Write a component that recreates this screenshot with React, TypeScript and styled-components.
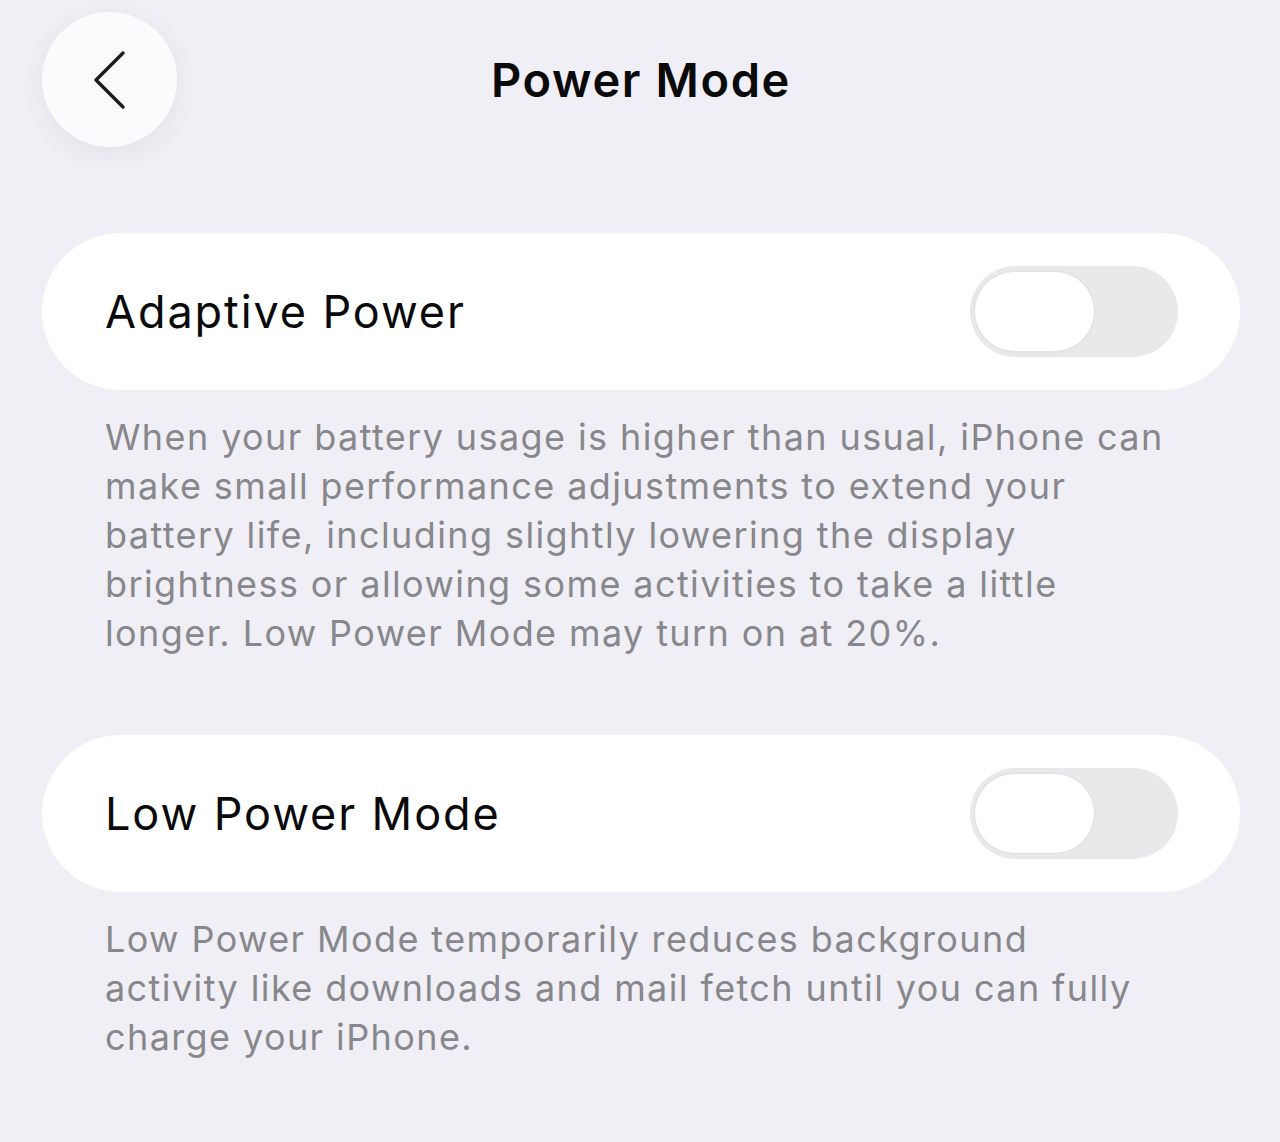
import React from 'react';
import styled, { createGlobalStyle } from 'styled-components';

const GlobalStyle = createGlobalStyle`
    html, body {
        margin: 0;
        padding: 0;
        background: #f0eff5;
    }
    body {
        font-family: Inter, 'Noto Sans', 'Liberation Sans', sans-serif;
        -webkit-font-smoothing: antialiased;
    }
`;

const Page = styled.div`
    min-height: 1142px;
    box-sizing: border-box;
    padding: 12px 40px 0 42px;
    background: #f0eff5;
`;

const Header = styled.header`
    display: grid;
    grid-template-columns: 1fr auto 1fr;
    align-items: center;
    height: 135px;
`;

const BackButton = styled.button`
    width: 135px;
    height: 135px;
    border: none;
    border-radius: 50%;
    background: #fbfbfd;
    box-shadow: 0 6px 28px rgba(0, 0, 0, 0.06);
    display: flex;
    align-items: center;
    justify-content: center;
    padding: 0;
    cursor: pointer;
`;

const Title = styled.h1`
    margin: 0;
    font-size: 47px;
    font-weight: 600;
    letter-spacing: 1.6px;
    color: #0a0a0a;
`;

const Card = styled.div<{ $top: number }>`
    margin-top: ${(p) => p.$top}px;
    height: 157px;
    box-sizing: border-box;
    padding: 0 62px 0 63px;
    border-radius: 79px;
    background: #ffffff;
    display: flex;
    align-items: center;
    justify-content: space-between;
`;

const Label = styled.span`
    font-size: 45px;
    font-weight: 400;
    letter-spacing: 1.9px;
    color: #0a0a0a;
`;

const Track = styled.div`
    width: 208px;
    height: 91px;
    border-radius: 46px;
    background: #e9e9eb;
    box-sizing: border-box;
    padding: 6px 0 6px 5px;
    display: flex;
    align-items: center;
`;

const Knob = styled.div`
    width: 119px;
    height: 79px;
    border-radius: 40px;
    background: #ffffff;
    box-shadow: 0 0 0 1.5px #e2e2e5;
`;

// footer text under each group, wraps at ~1167px like the settings list
const Note = styled.p`
    margin: 23px 0 0;
    padding: 0 73px 0 63px;
    font-size: 36px;
    line-height: 49px;
    color: #87878c;
    letter-spacing: 1.4px;
`;

const Chevron: React.FC = () => (
    <svg width="40" height="62" viewBox="0 0 40 62" fill="none">
        <path d="M33 4 L6 31 L33 58" stroke="#1c1c1e" strokeWidth="3.4" strokeLinecap="round" strokeLinejoin="round" />
    </svg>
);

const Toggle: React.FC = () => (
    <Track>
        <Knob />
    </Track>
);

const App: React.FC = () => {
    return (
        <Page>
            <GlobalStyle />
            <Header>
                <div>
                    <BackButton aria-label="Back">
                        <Chevron />
                    </BackButton>
                </div>
                <Title>Power Mode</Title>
                <div />
            </Header>

            <Card $top={86}>
                <Label>Adaptive Power</Label>
                <Toggle />
            </Card>
            <Note>
                When your battery usage is higher than usual, iPhone can make small performance adjustments to
                extend your battery life, including slightly lowering the display brightness or allowing some
                activities to take a little longer. Low Power Mode may turn on at 20%.
            </Note>

            <Card $top={77}>
                <Label>Low Power Mode</Label>
                <Toggle />
            </Card>
            <Note>
                Low Power Mode temporarily reduces background activity like downloads and mail fetch until you can
                fully charge your iPhone.
            </Note>
        </Page>
    );
};

export default App;
